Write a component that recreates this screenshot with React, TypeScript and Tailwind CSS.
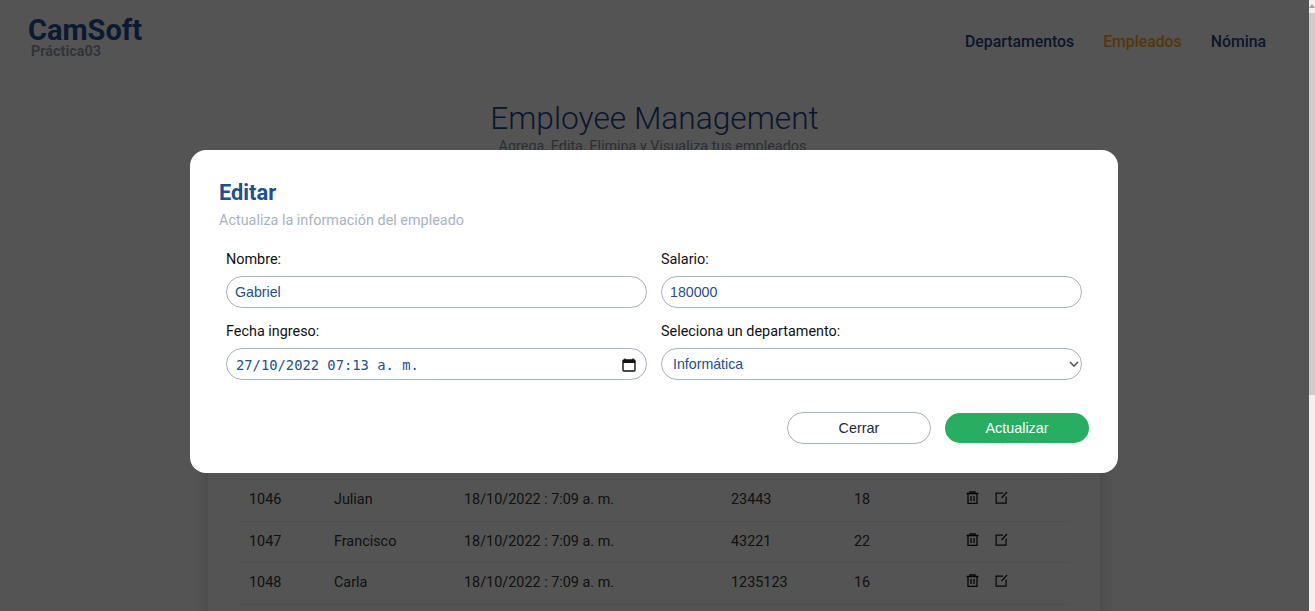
import React from "react";

const rows = [
  { id: 1046, name: "Julian", date: "18/10/2022 : 7:09 a. m.", salary: 23443, dept: 18 },
  { id: 1047, name: "Francisco", date: "18/10/2022 : 7:09 a. m.", salary: 43221, dept: 22 },
  { id: 1048, name: "Carla", date: "18/10/2022 : 7:09 a. m.", salary: 1235123, dept: 16 },
];

const labelClass = "block mb-[8px] h-[16px] leading-[16px] text-[14.4px] text-[#111]";
const fieldClass =
  "w-full h-[32px] rounded-full border border-[#a9b2c3] bg-white text-[14.2px] text-[#24508f] outline-none font-['Liberation_Sans',Arial,sans-serif]";

const TrashIcon = () => (
  <svg width="13" height="13" viewBox="0 0 13 13" fill="none" stroke="#111" strokeWidth="1.3">
    <path d="M.5 2.5h12M4 2.5V.8h5v1.7" />
    <path d="M2 2.5v9.8h9V2.5" />
    <path d="M5 5v5M8 5v5" />
  </svg>
);

const PenIcon = () => (
  <svg width="13" height="13" viewBox="0 0 13 13" fill="none" stroke="#111" strokeWidth="1.2">
    <path d="M8 2.1H1.1v10h10V5.5" />
    <path d="M6.5 7 12 1" />
  </svg>
);

const App: React.FC = () => {
  return (
    <div className="flex h-[611px] w-full overflow-hidden font-['Roboto',sans-serif]">
      <div className="relative flex-1 bg-[#eff1ef]">
        <header className="flex justify-between h-[72px] pl-[28px] pr-[43px]">
          <div className="pt-[17px]">
            <div className="text-[29px] font-bold leading-[26px] text-[#1c4a8c]">CamSoft</div>
            <div className="pl-[3px] mt-[2px] text-[14.4px] font-bold leading-[14px] text-[#8d95a3]">Práctica03</div>
          </div>
          <nav className="flex gap-[29px] pt-[32px] text-[15.8px] font-medium leading-[19px] text-[#1f4378]">
            <span>Departamentos</span>
            <span className="text-[#f39c12]">Empleados</span>
            <span>Nómina</span>
          </nav>
        </header>

        <div className="text-center">
          <h1 className="mt-[28px] text-[31.7px] font-light leading-[38px] text-[#1c4380]">Employee Management</h1>
          <p className="pr-[4px] text-[14.4px] leading-[18px] text-[#7d8799]">Agrega, Edita, Elimina y Visualiza tus empleados</p>
        </div>

        <div className="ml-[208px] mt-[59px] w-[892px] h-[500px] px-[30px] pt-[264px] bg-[#eff1ef] shadow-[0_0_16px_rgba(0,0,0,0.18)]">
          <table className="w-full table-fixed border-collapse border-t border-[#dfe2e5] text-[14.4px] text-[#333]">
            <colgroup>
              <col className="w-[85px]" />
              <col className="w-[130px]" />
              <col className="w-[267px]" />
              <col className="w-[123px]" />
              <col className="w-[112px]" />
              <col />
            </colgroup>
            <tbody>
              {rows.map((item) => (
                <tr key={item.id} className="h-[41.5px] border-b border-[#dfe2e5]">
                  <td className="pl-[11px]">{item.id}</td>
                  <td className="pl-[11px]">{item.name}</td>
                  <td className="pl-[11px]">{item.date}</td>
                  <td className="pl-[11px]">{item.salary}</td>
                  <td className="pl-[11px]">{item.dept}</td>
                  <td className="pl-[11px]">
                    <div className="flex gap-[16px] -mt-[5px]">
                      <TrashIcon />
                      <PenIcon />
                    </div>
                  </td>
                </tr>
              ))}
            </tbody>
          </table>
        </div>

        <div className="absolute inset-0 flex justify-center items-start pt-[150px] pr-[1px] bg-black/[.65]">
          <div className="w-[928px] h-[323px] rounded-[16px] bg-white px-[29px] pt-[30px]">
            <h2 className="text-[21.8px] font-bold leading-[26px] text-[#1f4f8f]">Editar</h2>
            <p className="mt-[6px] text-[14.4px] leading-[18px] text-[#aab2c2]">Actualiza la información del empleado</p>

            <form className="mt-[22px] grid grid-cols-2 gap-x-[14px] gap-y-[16px] pl-[7px] pr-[7px]">
              <div>
                <label className={labelClass}>Nombre:</label>
                <input className={`${fieldClass} pl-[8px]`} defaultValue="Gabriel" />
              </div>
              <div>
                <label className={labelClass}>Salario:</label>
                <input className={`${fieldClass} pl-[8px]`} defaultValue="180000" />
              </div>
              <div>
                <label className={labelClass}>Fecha ingreso:</label>
                <div className={`${fieldClass} flex items-center justify-between pl-[9px] pr-[10px]`}>
                  <span className="pt-[2px] font-['DejaVu_Sans_Mono',monospace] text-[13.8px]">27/10/2022 07:13 a. m.</span>
                  <svg width="14" height="14" viewBox="0 0 14 14" fill="none" className="mt-[2px] text-[#111]">
                    <path d="M3 .5v2M11 .5v2" stroke="currentColor" strokeWidth="1.4" />
                    <rect x="1" y="2" width="12" height="11" rx="1" stroke="currentColor" strokeWidth="1.4" />
                    <rect x="1" y="2" width="12" height="3" fill="currentColor" />
                  </svg>
                </div>
              </div>
              <div>
                <label className={labelClass}>Seleciona un departamento:</label>
                <div className="relative">
                  <select className={`${fieldClass} appearance-none pl-[11px] pr-[20px] pt-[2px]`} defaultValue="Informática">
                    <option>Informática</option>
                  </select>
                  <svg width="10" height="6" viewBox="0 0 10 6" fill="none" stroke="#555" strokeWidth="1.6" className="absolute right-[3px] top-[13px]">
                    <path d="M1 1l4 4 4-4" />
                  </svg>
                </div>
              </div>
            </form>

            <div className="mt-[32px] flex items-center justify-end gap-[14px] font-['Liberation_Sans',Arial,sans-serif] text-[14.4px]">
              <button className="w-[144px] h-[32px] pt-[2px] rounded-full border border-[#a9b2c3] bg-white text-[#1c2b3a]">Cerrar</button>
              <button className="w-[144px] h-[30px] pt-[2px] rounded-full bg-[#27ae60] text-white">Actualizar</button>
            </div>
          </div>
        </div>
      </div>

      <div className="flex flex-col w-[6px] bg-[#f1f1f1]">
        <div className="h-[13px] flex justify-center pt-[4px]">
          <div className="w-0 h-0 border-x-[3px] border-b-[4px] border-x-transparent border-b-[#a3a3a3]" />
        </div>
        <div className="h-[382px] bg-[#cdcdcd]" />
      </div>
    </div>
  );
};

export default App;
